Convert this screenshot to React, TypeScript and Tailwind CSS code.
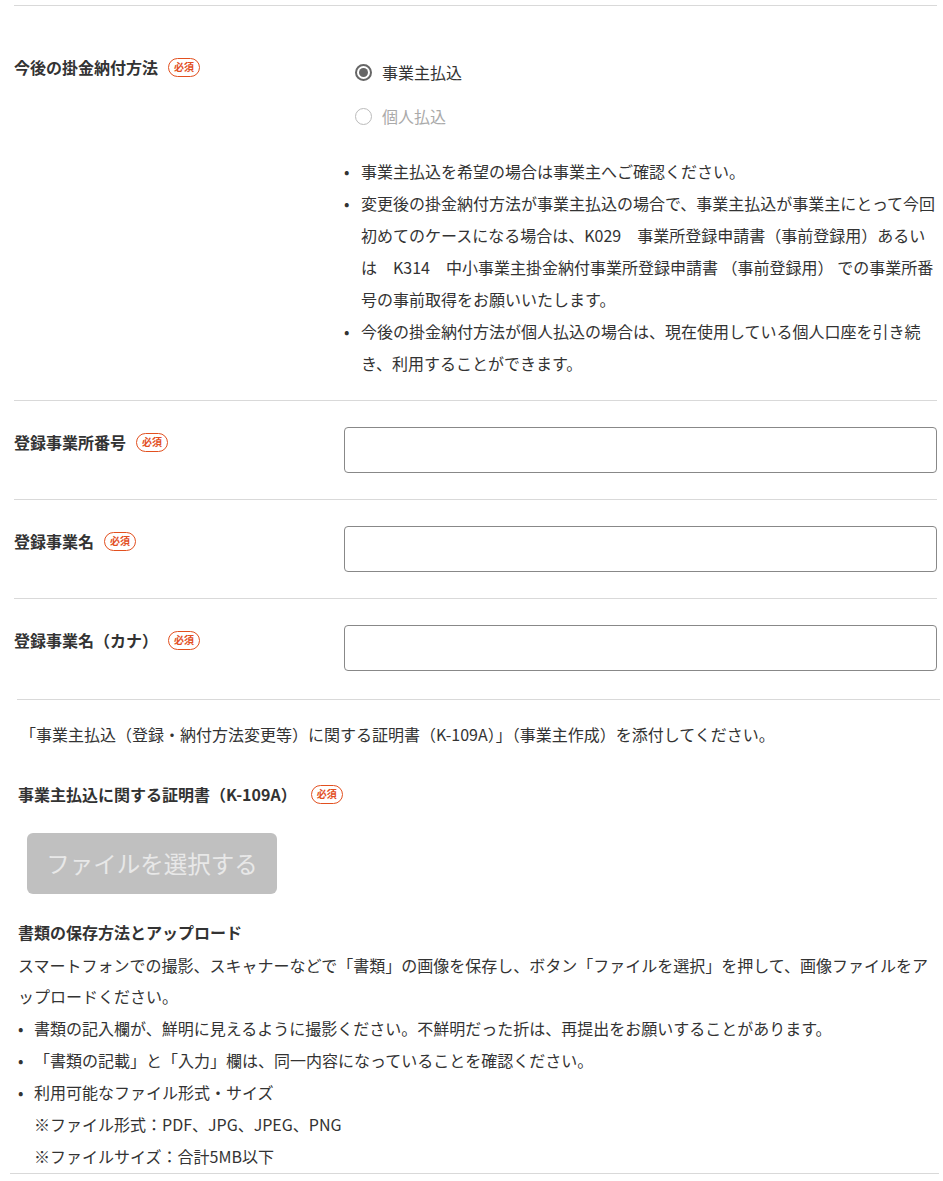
import React, { useState } from "react";

const Badge = () => (
  <span className="inline-flex items-center justify-center h-[19px] px-[5px] rounded-full border-[1.5px] border-[#e2501f] text-[#e2501f] text-[10px] font-bold leading-none">
    必須
  </span>
);

const Label = ({ text }: { text: string }) => (
  <div className="flex items-center gap-[10px] text-[16px] font-bold leading-[24px] text-[#333]">
    <span>{text}</span>
    <Badge />
  </div>
);

const InputRow = ({ label }: { label: string }) => (
  <div className="flex border-t border-[#d9d9d9] py-[26px]">
    <div className="w-[330px] pt-[3px]">
      <Label text={label} />
    </div>
    <input className="flex-1 h-[46px] border border-[#888] rounded-[4px] bg-white" />
  </div>
);

const App = () => {
  const [pay, setPay] = useState("owner");

  const radio = (value: string, text: string, disabled: boolean) => {
    const checked = pay === value;
    return (
      <button
        className="flex items-center gap-[10px] h-[24px]"
        onClick={() => !disabled && setPay(value)}
      >
        <span
          className={
            checked
              ? "w-[17px] h-[17px] rounded-full border-2 border-[#666] flex items-center justify-center"
              : "w-[17px] h-[17px] rounded-full border-[1.5px] border-[#bbb]"
          }
        >
          {checked && <span className="w-[9px] h-[9px] rounded-full bg-[#666]" />}
        </span>
        <span className={checked ? "text-[#333]" : "text-[#aaa]"}>{text}</span>
      </button>
    );
  };

  return (
    <div
      className="bg-white text-[#333] text-[16px] pt-[5px]"
      style={{ fontFamily: '"Noto Sans CJK JP", "Noto Sans", sans-serif' }}
    >
      <div className="pl-[14px] pr-[6px]">
        {/* 納付方法 */}
        <div className="flex border-t border-[#d9d9d9] pt-[49px] pb-[21px]">
          <div className="w-[330px]">
            <Label text="今後の掛金納付方法" />
          </div>
          <div className="flex-1">
            <div className="flex flex-col gap-[20px] pl-[11px] pt-[5px]">
              {radio("owner", "事業主払込", false)}
              {radio("self", "個人払込", true)}
            </div>
            <ul className="mt-[27px] leading-[32px] text-[16px]">
              <li className="flex">
                <span className="w-[17px] shrink-0">•</span>
                <span>事業主払込を希望の場合は事業主へご確認ください。</span>
              </li>
              <li className="flex">
                <span className="w-[17px] shrink-0">•</span>
                <span>
                  変更後の掛金納付方法が事業主払込の場合で、事業主払込が事業主にとって今回初めてのケースになる場合は、K029　事業所登録申請書（事前登録用）あるい<br />は　K314　中小事業主掛金納付事業所登録申請書 （事前登録用） での事業所番号の事前取得をお願いいたします。
                </span>
              </li>
              <li className="flex">
                <span className="w-[17px] shrink-0">•</span>
                <span>今後の掛金納付方法が個人払込の場合は、現在使用している個人口座を引き続き、利用することができます。</span>
              </li>
            </ul>
          </div>
        </div>

        <InputRow label="登録事業所番号" />
        <InputRow label="登録事業名" />
        <InputRow label="登録事業名（カナ）" />
      </div>

      {/* 添付書類 */}
      <div className="pl-[17px] pr-[3px] pt-[2px]">
        <div className="border-t border-[#d9d9d9] pt-[22px] pl-[3px] text-[16px] leading-[24px]">
          「事業主払込（登録・納付方法変更等）に関する証明書（K-109A）」（事業主作成）を添付してください。
        </div>
        <div className="mt-[36px] flex items-center gap-[14px] pl-[1px] text-[16px] font-bold leading-[24px]">
          <span>事業主払込に関する証明書（K-109A）</span>
          <Badge />
        </div>
      </div>

      <div className="pl-[27px] mt-[27px]">
        <button className="w-[250px] h-[61px] rounded-[6px] bg-[#c0c0c0] text-[#e8e8e8] text-[23.5px]">
          ファイルを選択する
        </button>
      </div>

      <div className="pl-[10px] pr-[4px] mt-[26px]">
        <div className="pl-[8px] pb-[1px] leading-[32px]">
          <div className="font-bold leading-[24px] mb-[6px]">書類の保存方法とアップロード</div>
          <p className="leading-[31px]">
            スマートフォンでの撮影、スキャナーなどで「書類」の画像を保存し、ボタン「ファイルを選択」を押して、画像ファイルをアップロードください。
          </p>
          <ul>
            <li className="flex">
              <span className="w-[16px] shrink-0">•</span>
              <span>書類の記入欄が、鮮明に見えるように撮影ください。不鮮明だった折は、再提出をお願いすることがあります。</span>
            </li>
            <li className="flex">
              <span className="w-[16px] shrink-0">•</span>
              <span>「書類の記載」と「入力」欄は、同一内容になっていることを確認ください。</span>
            </li>
            <li className="flex">
              <span className="w-[16px] shrink-0">•</span>
              <span>利用可能なファイル形式・サイズ</span>
            </li>
            <li className="pl-[16px]">※ファイル形式：PDF、JPG、JPEG、PNG</li>
            <li className="pl-[16px]">※ファイルサイズ：合計5MB以下</li>
          </ul>
        </div>
        <div className="border-t border-[#d9d9d9]" />
      </div>
    </div>
  );
};

export default App;
